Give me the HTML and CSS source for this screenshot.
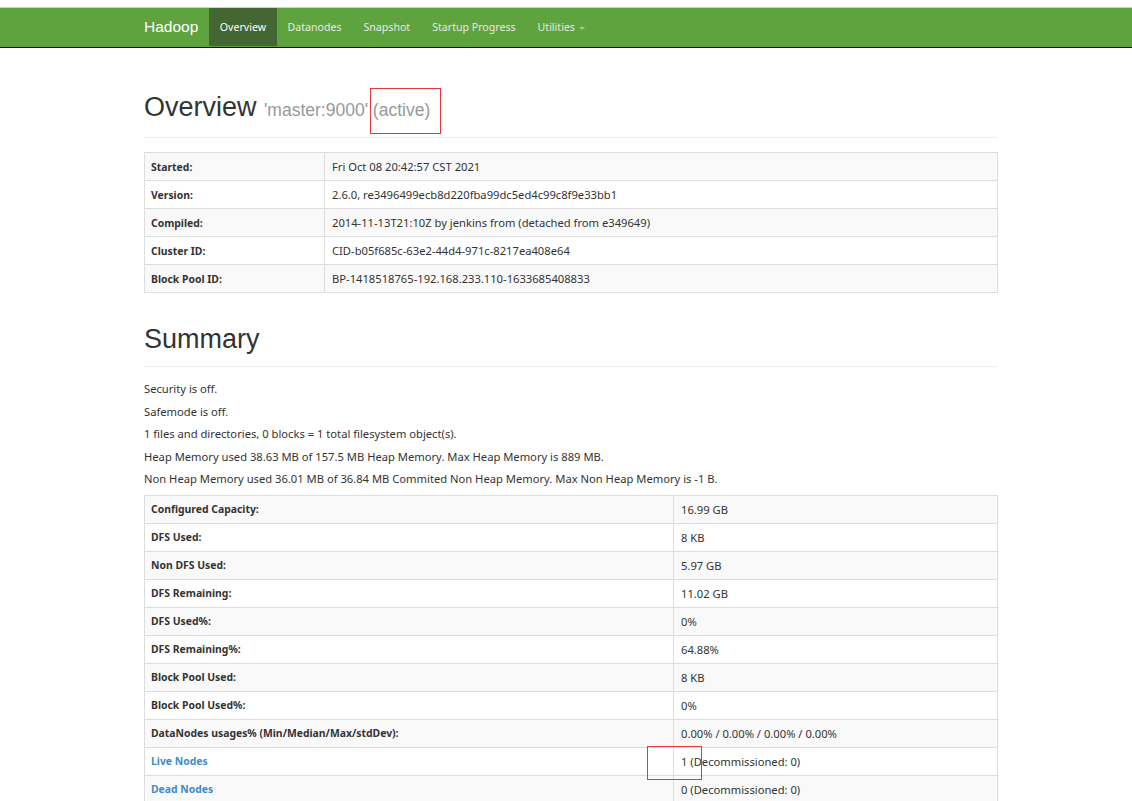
FILE: index.html
```html
<!DOCTYPE html>
<html>
<head>
<meta charset="utf-8">
<title>Namenode information</title>
<link rel="stylesheet" href="styles.css">
</head>
<body>
<div class="topgap"></div>
<nav class="navbar">
  <div class="nav-inner">
    <span class="brand">Hadoop</span>
    <ul class="nav">
      <li class="active"><a>Overview</a></li>
      <li><a>Datanodes</a></li>
      <li><a>Snapshot</a></li>
      <li><a>Startup Progress</a></li>
      <li><a>Utilities <span class="caret"></span></a></li>
    </ul>
  </div>
</nav>
<div class="container">
  <div class="page-header">
    <h1>Overview <small>'master:9000' (active)</small></h1>
  </div>
  <table class="table t1">
    <tr><th>Started:</th><td>Fri Oct 08 20:42:57 CST 2021</td></tr>
    <tr><th>Version:</th><td>2.6.0, re3496499ecb8d220fba99dc5ed4c99c8f9e33bb1</td></tr>
    <tr><th>Compiled:</th><td>2014-11-13T21:10Z by jenkins from (detached from e349649)</td></tr>
    <tr><th>Cluster ID:</th><td>CID-b05f685c-63e2-44d4-971c-8217ea408e64</td></tr>
    <tr><th>Block Pool ID:</th><td>BP-1418518765-192.168.233.110-1633685408833</td></tr>
  </table>
  <div class="page-header second">
    <h1>Summary</h1>
  </div>
  <p>Security is off.</p>
  <p>Safemode is off.</p>
  <p>1 files and directories, 0 blocks = 1 total filesystem object(s).</p>
  <p>Heap Memory used 38.63 MB of 157.5 MB Heap Memory. Max Heap Memory is 889 MB.</p>
  <p>Non Heap Memory used 36.01 MB of 36.84 MB Commited Non Heap Memory. Max Non Heap Memory is -1 B.</p>
  <table class="table t2">
    <tr><th>Configured Capacity:</th><td>16.99 GB</td></tr>
    <tr><th>DFS Used:</th><td>8 KB</td></tr>
    <tr><th>Non DFS Used:</th><td>5.97 GB</td></tr>
    <tr><th>DFS Remaining:</th><td>11.02 GB</td></tr>
    <tr><th>DFS Used%:</th><td>0%</td></tr>
    <tr><th>DFS Remaining%:</th><td>64.88%</td></tr>
    <tr><th>Block Pool Used:</th><td>8 KB</td></tr>
    <tr><th>Block Pool Used%:</th><td>0%</td></tr>
    <tr><th>DataNodes usages% (Min/Median/Max/stdDev):</th><td>0.00% / 0.00% / 0.00% / 0.00%</td></tr>
    <tr><th><a class="lnk">Live Nodes</a></th><td>1 (Decommissioned: 0)</td></tr>
    <tr><th><a class="lnk">Dead Nodes</a></th><td>0 (Decommissioned: 0)</td></tr>
  </table>
</div>
<div class="mark mark1"></div>
<div class="mark mark2"></div>
</body>
</html>
```
FILE: styles.css
```css
html, body {
  margin: 0;
  padding: 0;
  background: #fff;
  height: 801px;
  overflow: hidden;
}
body {
  font-family: "Noto Sans", "Open Sans", sans-serif;
  font-size: 11.2px;
  color: #333;
  position: relative;
}
.topgap {
  height: 7px;
  background: #fff;
  border-bottom: 1px solid #cfcfcf;
}
.navbar {
  height: 39px;
  background: #5fa33e;
  border-bottom: 1px solid #111;
}
.nav-inner {
  display: flex;
  align-items: stretch;
  height: 39px;
  padding-left: 144px;
}
.brand {
  font-family: "Liberation Sans", Arial, sans-serif;
  color: #fff;
  font-size: 15.5px;
  line-height: 38px;
  margin-right: 11px;
}
.nav {
  display: flex;
  list-style: none;
  margin: 0;
  padding: 0;
}
.nav li a {
  display: block;
  padding: 0 11px;
  line-height: 38px;
  color: #e8e8e8;
  font-size: 10.6px;
}
.nav li.active a {
  background: #436633;
  color: #fff;
  padding: 0 10.5px;
}
.caret {
  display: inline-block;
  width: 0;
  height: 0;
  border-left: 3px solid transparent;
  border-right: 3px solid transparent;
  border-top: 3px solid #a8c79a;
  vertical-align: middle;
  margin-left: 1px;
}
.container {
  width: 854px;
  margin-left: 144px;
}
.page-header {
  border-bottom: 1px solid #eee;
  padding-bottom: 11px;
  margin-top: 43px;
  margin-bottom: 14px;
}
.page-header.second {
  margin-top: 30px;
  margin-bottom: 11px;
}
h1 {
  font-family: "Liberation Sans", Arial, sans-serif;
  font-weight: 400;
  font-size: 27px;
  line-height: 32px;
  margin: 0;
  color: #333;
}
h1 small {
  font-size: 17.5px;
  color: #999;
}
p {
  margin: 0;
  line-height: 22.5px;
}
.table {
  width: 854px;
  border-collapse: collapse;
  border: 1px solid #ddd;
}
.t1 { margin-bottom: 20px; }
.t2 { margin-top: 4px; }
.table th, .table td {
  border: 1px solid #ddd;
  height: 28px;
  padding: 0 7px 0 6px;
  text-align: left;
  vertical-align: middle;
  box-sizing: border-box;
}
.table td { padding-left: 7px; }
.table th { font-weight: 700; font-size: 10.4px; }
.table tr:nth-child(odd) { background: #f9f9f9; }
.t1 th { width: 180px; }
.t2 th { width: 529px; }
.lnk { color: #428bca; }
.mark {
  position: absolute;
  border: 1px solid #e53935;
  box-sizing: border-box;
}
.mark1 { left: 370px; top: 88px; width: 71px; height: 46px; }
.mark2 { left: 647px; top: 746px; width: 55px; height: 34px; }
```
